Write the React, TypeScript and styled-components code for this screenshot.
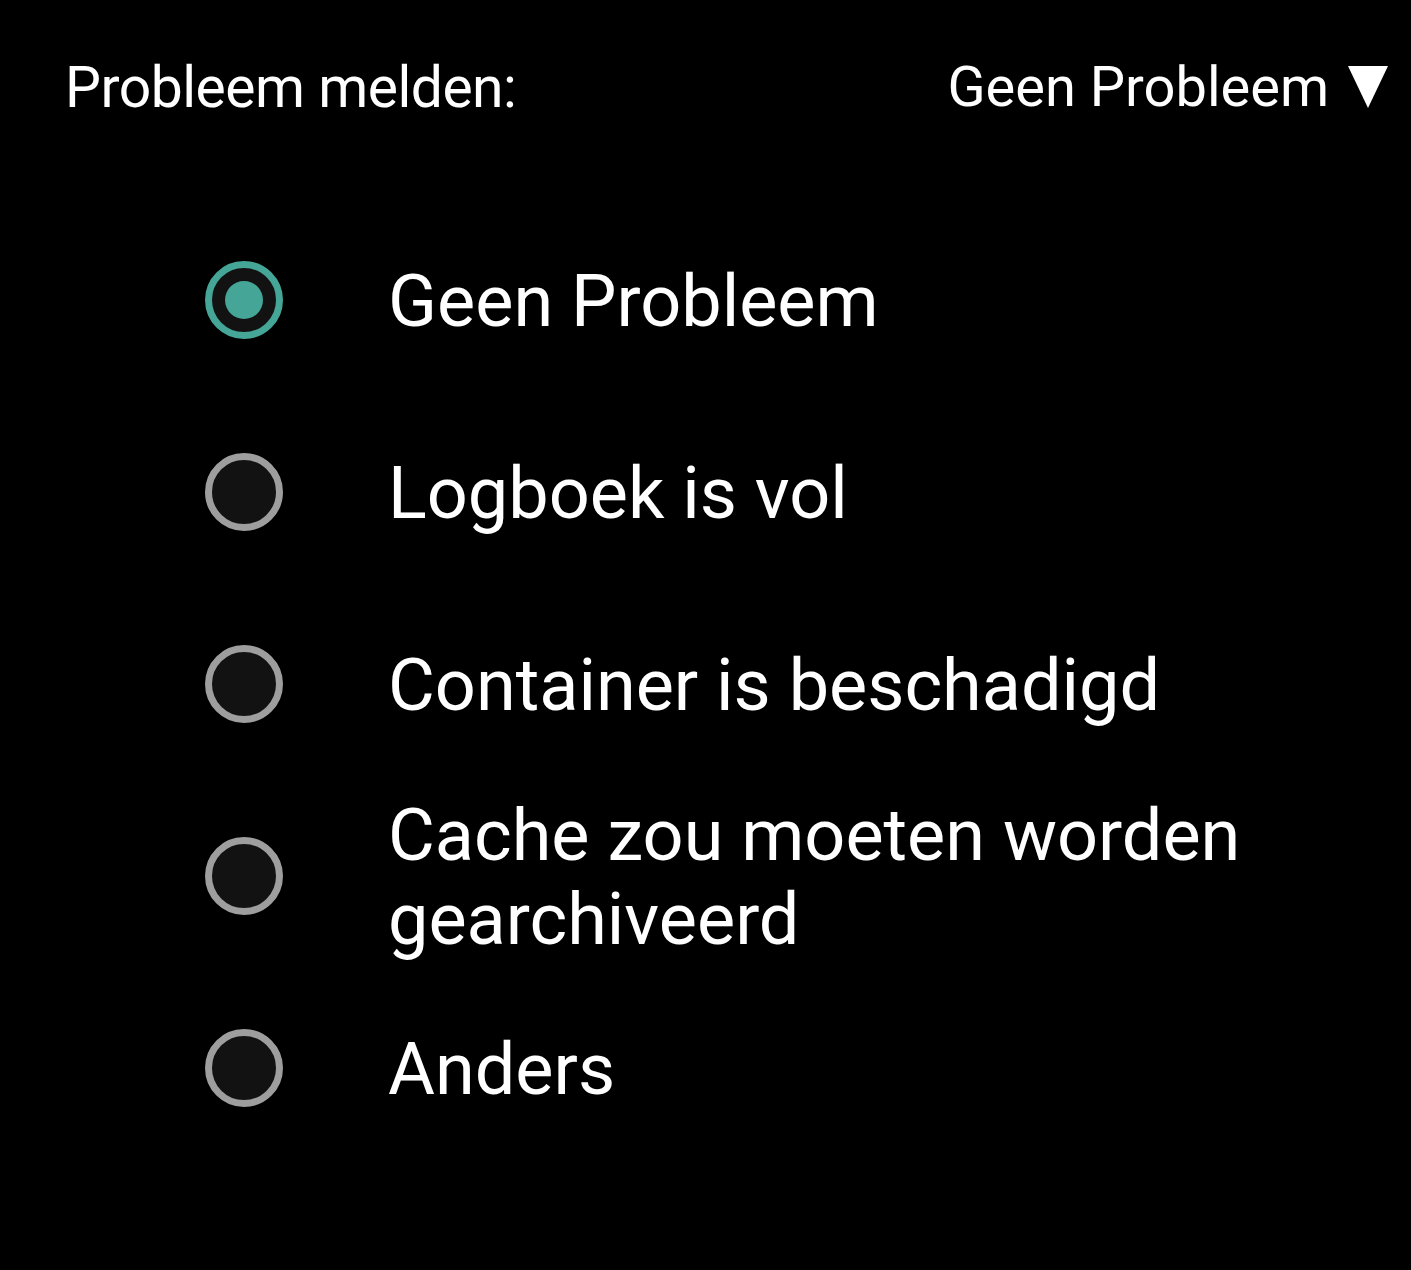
import styled, { createGlobalStyle } from "styled-components";
import { useState } from "react";

const GlobalStyle = createGlobalStyle`
  html, body {
    margin: 0;
    padding: 0;
    background: #000;
  }
  body {
    font-family: Roboto, "Noto Sans", sans-serif;
    color: #fff;
  }
`;

const Page = styled.div`
  width: 1411px;
  height: 1270px;
  background: #000;
  display: flex;
  flex-direction: column;
`;

const Header = styled.div`
  height: 174px;
  display: flex;
  align-items: center;
  justify-content: space-between;
  padding: 0 22px 0 65px;
  box-sizing: border-box;
  font-size: 56px;
  color: #fff;
`;

const Title = styled.span`
  font-size: 57px;
  letter-spacing: -0.5px;
`;

const Dropdown = styled.button`
  display: flex;
  align-items: center;
  gap: 18px;
  background: none;
  border: none;
  padding: 0;
  color: #fff;
  font: inherit;
  cursor: pointer;
`;

const List = styled.div`
  display: flex;
  flex-direction: column;
  padding: 30px 0 0 205px;
`;

const Row = styled.label`
  display: flex;
  align-items: center;
  height: 192px;
  cursor: pointer;
`;

const Radio = styled.span<{ $checked: boolean }>`
  flex: none;
  width: 78px;
  height: 78px;
  box-sizing: border-box;
  border-radius: 50%;
  border: 7px solid ${(p) => (p.$checked ? "#45a597" : "#9e9e9e")};
  background: #121212;
  display: flex;
  align-items: center;
  justify-content: center;
  margin-right: 105px;
`;

const Dot = styled.span`
  width: 38px;
  height: 38px;
  border-radius: 50%;
  background: #45a597;
`;

const Label = styled.span`
  font-size: 72px;
  line-height: 84px;
  color: #fff;
  max-width: 900px;
  margin-top: 4px;
`;

const options = [
  "Geen Probleem",
  "Logboek is vol",
  "Container is beschadigd",
  "Cache zou moeten worden gearchiveerd",
  "Anders",
];

export default function App() {
  const [selected, setSelected] = useState(0);
  return (
    <Page>
      <GlobalStyle />
      <Header>
        <Title>Probleem melden:</Title>
        <Dropdown>
          {options[selected]}
          <svg width="42" height="42" viewBox="0 0 42 42">
            <polygon points="1,0 41,0 21,42" fill="#fff" />
          </svg>
        </Dropdown>
      </Header>
      <List>
        {options.map((o, i) => (
          <Row key={o} onClick={() => setSelected(i)}>
            <Radio $checked={selected === i}>{selected === i && <Dot />}</Radio>
            <Label>{o}</Label>
          </Row>
        ))}
      </List>
    </Page>
  );
}
